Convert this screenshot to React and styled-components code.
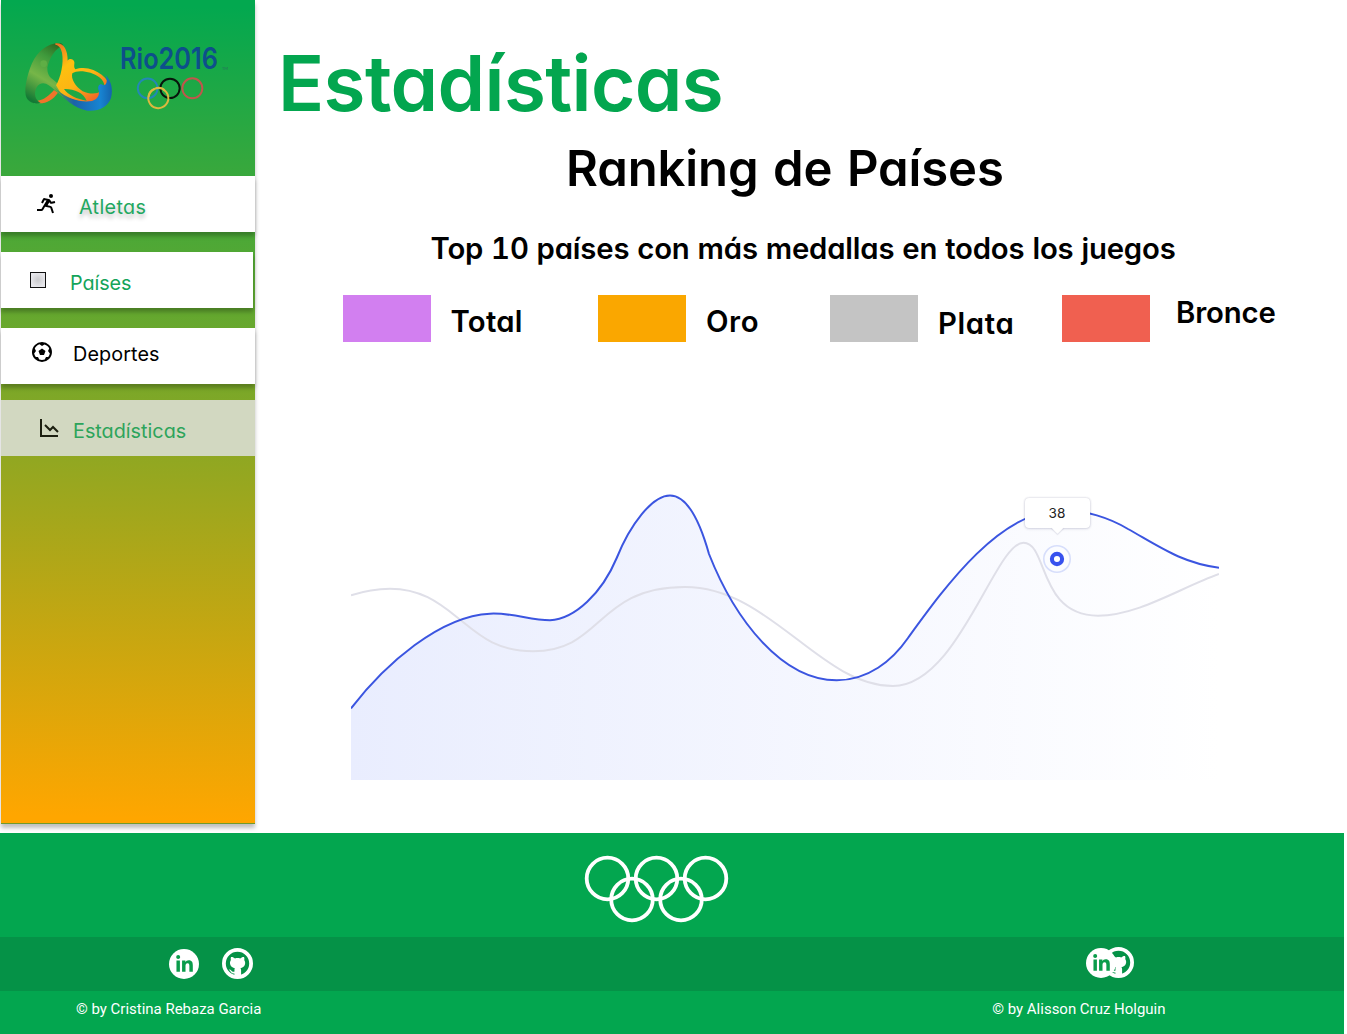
import React from "react";
import styled, { createGlobalStyle } from "styled-components";
import { BiRun, BiFootball, BiLineChartDown } from "react-icons/bi";
import { FaLinkedinIn } from "react-icons/fa";

const Global = createGlobalStyle`
  * { box-sizing: border-box; }
  body { margin: 0; background: #fff; font-family: Inter, "Open Sans", sans-serif; font-feature-settings: "cv11"; }
`;

const Page = styled.div`
  display: flex;
  flex-direction: column;
  width: 1347px;
  height: 1034px;
  overflow: hidden;
`;

const Top = styled.div`
  display: flex;
  height: 833px;
  padding-left: 1px;
`;

const Sidebar = styled.aside`
  width: 254px;
  height: 824px;
  flex: none;
  background: linear-gradient(181.5deg, #03a84f 1%, #36a83d 20%, #ffa600 99%);
  border-bottom: 1px solid #6f9a2c;
  box-shadow: 0 4px 4px rgba(0, 0, 0, 0.25);
`;

const LogoArea = styled.div`
  height: 176px;
  padding-top: 20px;
  svg { display: block; margin-left: -1px; }
`;

const NavItem = styled.a`
  display: flex;
  align-items: flex-start;
  width: ${(p) => p.$width || 254}px;
  height: 56px;
  margin-bottom: ${(p) => p.$gap}px;
  padding-left: ${(p) => p.$left}px;
  background: ${(p) => (p.$active ? "#d2d8c1" : "#fff")};
  box-shadow: ${(p) => (p.$active ? "none" : "0 4px 4px rgba(0, 0, 0, 0.25)")};
  color: #000;
  > svg { flex: none; margin-top: ${(p) => p.$iconTop}px; color: ${(p) => (p.$active ? "#1c1f10" : "#000")}; }
`;

const NavLabel = styled.span`
  margin-left: ${(p) => p.$left}px;
  margin-top: ${(p) => p.$top}px;
  font-size: 19.8px;
  line-height: 24px;
  letter-spacing: ${(p) => p.$spacing || 0}px;
  white-space: nowrap;
  color: ${(p) => p.$color};
  text-shadow: ${(p) => (p.$shadow ? "0 4px 4px rgba(0, 0, 0, 0.25)" : "none")};
`;

const FlagBox = styled.span`
  width: 16px;
  height: 16px;
  margin-top: 20px;
  border: 1px solid #111;
  background: radial-gradient(#cdcdd0 10%, #e6e6ea 70%);
`;

const Main = styled.main`
  display: flex;
  flex-direction: column;
  flex: 1;
`;

const Title = styled.h1`
  margin: 33px 0 0 23px;
  font-size: 76.3px;
  line-height: 100px;
  font-weight: 600;
  letter-spacing: -0.6px;
  color: #03a64f;
  white-space: nowrap;
  align-self: flex-start;
`;

const Heading = styled.h2`
  margin: 6px 0 0 311px;
  font-size: 49px;
  line-height: 60px;
  font-weight: 600;
  letter-spacing: -0.12px;
  word-spacing: 2.4px;
  white-space: nowrap;
  align-self: flex-start;
`;

const Subtitle = styled.h3`
  margin: 30px 0 0 175.5px;
  font-size: 29.3px;
  line-height: 40px;
  font-weight: 600;
  letter-spacing: -0.16px;
  word-spacing: 0.2px;
  font-feature-settings: "cv11", "tnum";
  white-space: nowrap;
  align-self: flex-start;
`;

const Legend = styled.div`
  display: grid;
  grid-template-columns: 255px 232px 232px 232px;
  margin: 26px 0 0 88px;
`;

const LegendItem = styled.div`
  display: flex;
  align-items: flex-start;
  height: 47px;
`;

const Swatch = styled.span`
  width: 88px;
  height: 47px;
  flex: none;
  background: ${(p) => p.$color};
`;

const LegendLabel = styled.span`
  margin: ${(p) => p.$top}px 0 0 ${(p) => p.$left}px;
  font-size: 29.3px;
  line-height: 36px;
  font-weight: 600;
  letter-spacing: ${(p) => p.$spacing}px;
`;

const ChartBox = styled.div`
  position: relative;
  width: 868px;
  height: 300px;
  margin: 138px 0 0 96px;
  > svg { display: block; }
`;

const Tooltip = styled.div`
  position: absolute;
  left: 673.5px;
  top: 18px;
  width: 65px;
  height: 30px;
  border-radius: 4px;
  background: #fff;
  box-shadow: 0 0 2px rgba(60, 60, 110, 0.3), 0 1px 3px rgba(60, 60, 110, 0.12);
  font-size: 13.6px;
  line-height: 30px;
  text-align: center;
  color: #222;
  &::after {
    content: "";
    position: absolute;
    left: 28px;
    top: 25px;
    width: 9px;
    height: 9px;
    background: #fff;
    transform: rotate(45deg);
    box-shadow: 1px 1px 1px rgba(60, 60, 110, 0.12);
  }
`;

const Footer = styled.footer`
  width: 1344px;
  height: 201px;
  background: #03a64f;
  color: #fff;
`;

const RingsRow = styled.div`
  height: 104px;
  padding: 21px 0 0 584px;
  svg { display: block; }
`;

const SocialBar = styled.div`
  display: flex;
  justify-content: space-between;
  height: 54px;
  padding: 10px 210px 0 169px;
  background: #059247;
`;

const SocialGroup = styled.div`
  display: flex;
  align-items: flex-start;
`;

const SocialIcon = styled.span`
  display: grid;
  place-items: center;
  width: 30px;
  height: 30px;
  border-radius: 50%;
  background: #fff;
  color: #0a9c4b;
  z-index: 1;
  margin-top: ${(p) => p.$top}px;
`;

const GithubBadge = styled.span`
  display: block;
  height: 31px;
  margin-left: ${(p) => p.$left}px;
  margin-top: ${(p) => p.$top}px;
  svg { display: block; }
`;

const Credits = styled.div`
  display: flex;
  justify-content: space-between;
  padding: 8px 178.5px 0 76px;
  font-family: Roboto, sans-serif;
  font-size: 14.98px;
  line-height: 20px;
`;

function RioLogo() {
  return (
    <svg width="254" height="110" viewBox="0 0 762 330">
      <defs>
        <linearGradient id="leaf" x1="0.7" y1="0" x2="0.3" y2="1">
          <stop offset="0" stopColor="#2c6e23" />
          <stop offset="0.25" stopColor="#3f9a3c" />
          <stop offset="0.6" stopColor="#76b648" />
          <stop offset="1" stopColor="#147a35" />
        </linearGradient>
        <linearGradient id="sun" x1="0.1" y1="0" x2="0.8" y2="1">
          <stop offset="0" stopColor="#ee7623" />
          <stop offset="0.3" stopColor="#fdc010" />
          <stop offset="0.6" stopColor="#fcb414" />
          <stop offset="1" stopColor="#f0562a" />
        </linearGradient>
        <linearGradient id="sea" x1="0" y1="0" x2="1" y2="0">
          <stop offset="0" stopColor="#5d9e3e" />
          <stop offset="0.35" stopColor="#1b62a8" />
          <stop offset="0.8" stopColor="#1784d2" />
          <stop offset="1" stopColor="#1563ad" />
        </linearGradient>
      </defs>
      <path fill="#f0742a" d="M112,242 C132,240 148,226 162,210 L174,218 C160,238 142,250 118,250 Z" />
      <path
        fill="url(#leaf)"
        d="M184,70 C150,66 115,88 96,130 C80,168 70,215 80,234 C90,251 108,252 122,249 C106,240 100,222 110,202 C118,188 134,186 146,196 C160,206 172,218 190,232 L196,216 C182,202 174,190 158,178 C144,168 142,156 142,142 C150,112 165,86 190,76 Z"
      />
      <circle cx="131" cy="131" r="10" fill="#5fae45" />
      <path
        fill="url(#sun)"
        fillRule="evenodd"
        d="M166,70 C192,68 203,90 203,122 C206,114 221,115 223,126 C224,134 220,140 226,148 C240,142 262,142 280,150 C318,166 338,195 332,226 L300,244 C270,252 215,242 185,224 L168,196 C182,172 192,130 186,98 C182,82 176,76 166,74 Z M217,160 C212,176 226,200 248,214 C270,224 294,222 300,214 C318,210 318,188 298,172 C276,154 232,148 217,160 Z M192,207 C202,224 232,238 260,242 C250,218 222,206 192,207 Z"
      />
      <path
        fill="url(#sea)"
        d="M160,198 C190,232 240,250 276,243 C296,237 300,222 295,208 C292,196 302,188 310,196 C318,196 324,188 317,166 C334,182 340,210 333,234 C323,262 295,275 262,272 C225,266 188,236 160,198 Z"
      />
      <text
        x="360"
        y="147"
        fontSize="88"
        fontWeight="600"
        fill="#0d4f8b"
        fontFamily="Inter, sans-serif"
        textLength="294"
        lengthAdjust="spacingAndGlyphs"
      >
        Rio2016
      </text>
      <text x="666" y="149" fontSize="12" fill="#28705f" fontFamily="Lato, sans-serif">TM</text>
      <g fill="none" strokeWidth="6">
        <circle cx="443" cy="205" r="29.5" stroke="#2388b5" />
        <circle cx="577" cy="205" r="30" stroke="#c0564c" />
        <circle cx="510" cy="205" r="29" stroke="#08150c" />
        <path d="M489,208 A30,30 0 1 1 463,207" stroke="#dcb83f" />
        <path d="M446,231 A30,30 0 0 1 494,210" stroke="#dcb83f" />
      </g>
    </svg>
  );
}

function MedalChart() {
  const line =
    "M351,708.5 C385,664 440,616 490,613.7 C512,612.5 530,620.3 550,620.3 C575,619 602,593 616.7,558 C630,525 652,495.5 670,495.5 C687,495.5 700,522 709,554 C735,620 782,680.3 836.7,680.3 C868,680.3 892,661 908,638 C945,587 1000,510 1062,510 C1085,510 1110,518 1128,529 C1160,547 1182,563 1219,567.7";
  return (
    <svg width="868" height="300" viewBox="351 480 868 300">
      <defs>
        <linearGradient id="area" x1="0" x2="1" y1="0" y2="0">
          <stop offset="0" stopColor="#e9edfe" />
          <stop offset="1" stopColor="#ffffff" />
        </linearGradient>
      </defs>
      <path d={line + " V780 H351 Z"} fill="url(#area)" />
      <path
        d="M351,595.3 C364,591 377,588.7 390,588.7 C420,588.7 438,602 456.7,617 C478,634 495,651.3 533,651.3 C603,651.3 596,587 685,587 C770,587 820,686 893,686 C958,686 995,542.7 1023.5,542.7 C1048,542.7 1038,615.7 1098,615.7 C1138,615.7 1180,588 1219,574"
        fill="none"
        stroke="#dfdfe8"
        strokeWidth="2"
      />
      <path d={line} fill="none" stroke="#3b55e0" strokeWidth="2" />
      <circle cx="1057" cy="559" r="13.2" fill="#fbfcff" stroke="#d7defb" strokeWidth="1.6" />
      <circle cx="1057" cy="559" r="5.1" fill="#fff" stroke="#3751ee" strokeWidth="4.1" />
    </svg>
  );
}

function OlympicRings() {
  return (
    <svg width="146" height="70" viewBox="584 854 146 70" fill="none" stroke="#fff" strokeWidth="3.8">
      <circle cx="607.5" cy="878.5" r="20.8" />
      <circle cx="656.5" cy="878.5" r="20.8" />
      <circle cx="705.5" cy="878.5" r="20.8" />
      <circle cx="632" cy="899.5" r="20.8" />
      <circle cx="681" cy="899.5" r="20.8" />
    </svg>
  );
}

function GithubMark() {
  return (
    <svg width="31" height="31" viewBox="0 0 31 31">
      <circle cx="15.5" cy="15.5" r="13.6" fill="#059247" stroke="#fff" strokeWidth="3.8" />
      <path
        fill="#fff"
        d="M9,9 C10.5,8.8 12,9.6 13,10.4 C14.6,10 16.6,10 18.2,10.4 C19.2,9.6 20.6,8.8 22,9 C22.5,10.2 22.5,11.3 22.2,12.1 C24.4,15.4 22.8,19.6 18.4,20.2 C19,20.9 19.1,21.6 19.1,22.6 V28 H12.4 V25.4 C9.6,25.8 8.9,24.2 8,22.8 C7.5,22.2 6.8,21.8 7.2,21.5 C8.8,21.3 9.6,23.4 10.8,23.7 C11.5,23.8 12.1,23.7 12.5,23.5 C12.5,22 12.3,20.9 12.9,20.2 C8.4,19.6 6.8,15.4 8.9,12.1 C8.6,11.3 8.6,10.2 9,9 Z"
      />
    </svg>
  );
}

const Social = ({ top, githubLeft }) => (
  <SocialGroup>
    <SocialIcon $top={top}>
      <FaLinkedinIn size={19} />
    </SocialIcon>
    <GithubBadge $left={githubLeft} $top={top - 1}>
      <GithubMark />
    </GithubBadge>
  </SocialGroup>
);

const legend = [
  { label: "Total", color: "#d27ff0", left: 19.5, top: 8.5, spacing: 0.25 },
  { label: "Oro", color: "#faa700", left: 20, top: 8.5, spacing: 0.6 },
  { label: "Plata", color: "#c4c4c4", left: 20, top: 10.5, spacing: 0.65 },
  { label: "Bronce", color: "#f06050", left: 26, top: -0.5, spacing: -0.15 },
];

export default function App() {
  return (
    <>
      <Global />
      <Page>
        <Top>
          <Sidebar>
            <LogoArea>
              <RioLogo />
            </LogoArea>
            <NavItem $gap={20} $left={33} $iconTop={16}>
              <BiRun size={24} />
              <NavLabel $left={21} $top={19} $spacing={0.35} $color="#1fa860" $shadow>Atletas</NavLabel>
            </NavItem>
            <NavItem $gap={20} $left={29} $width={252}>
              <FlagBox />
              <NavLabel $left={24} $top={19} $spacing={-0.1} $color="#14a45a">Países</NavLabel>
            </NavItem>
            <NavItem $gap={16} $left={29} $iconTop={12}>
              <BiFootball size={24} />
              <NavLabel $left={19} $top={14} $spacing={0.1} $color="#000">Deportes</NavLabel>
            </NavItem>
            <NavItem $gap={0} $left={36} $iconTop={16} $active>
              <BiLineChartDown size={24} />
              <NavLabel $left={12} $top={19} $color="#2da45b">Estadísticas</NavLabel>
            </NavItem>
          </Sidebar>
          <Main>
            <Title>Estadísticas</Title>
            <Heading>Ranking de Países</Heading>
            <Subtitle>Top 10 países con más medallas en todos los juegos</Subtitle>
            <Legend>
              {legend.map((l) => (
                <LegendItem key={l.label}>
                  <Swatch $color={l.color} />
                  <LegendLabel $left={l.left} $top={l.top} $spacing={l.spacing}>{l.label}</LegendLabel>
                </LegendItem>
              ))}
            </Legend>
            <ChartBox>
              <MedalChart />
              <Tooltip>38</Tooltip>
            </ChartBox>
          </Main>
        </Top>
        <Footer>
          <RingsRow>
            <OlympicRings />
          </RingsRow>
          <SocialBar>
            <Social top={2} githubLeft={23} />
            <Social top={1} githubLeft={-13} />
          </SocialBar>
          <Credits>
            <span>© by Cristina Rebaza Garcia</span>
            <span>© by Alisson Cruz Holguin</span>
          </Credits>
        </Footer>
      </Page>
    </>
  );
}
